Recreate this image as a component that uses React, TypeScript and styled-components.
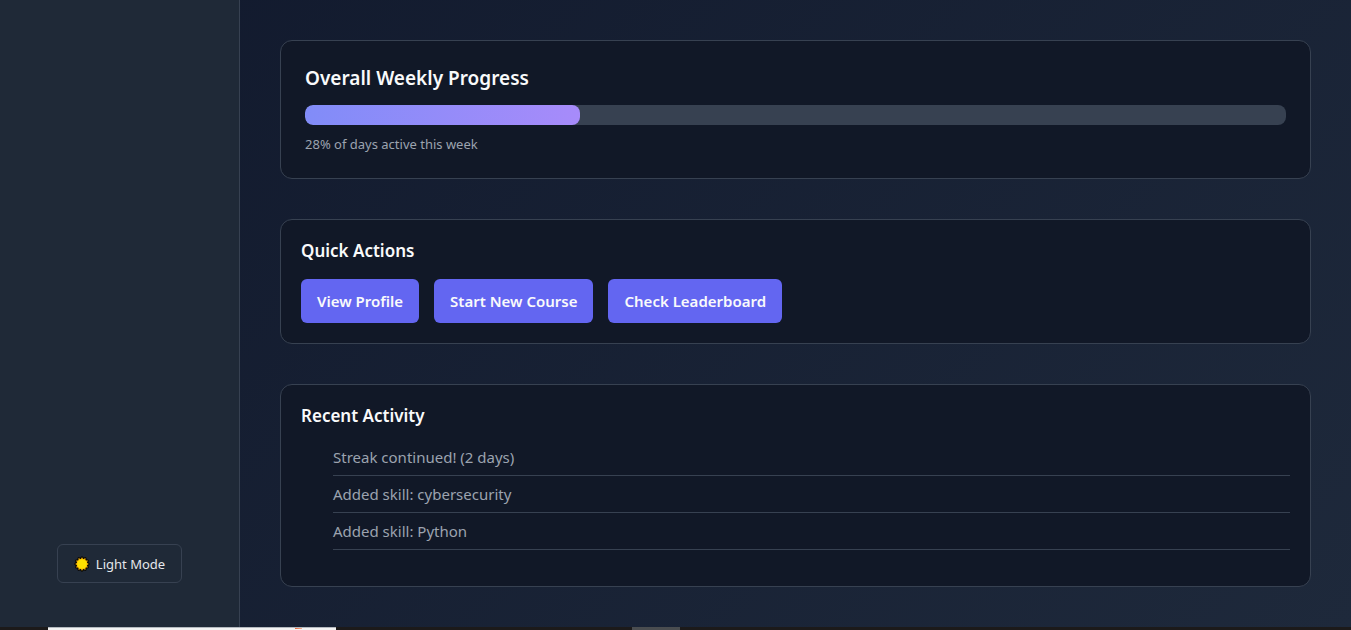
import React from "react";
import styled, { createGlobalStyle } from "styled-components";

const GlobalStyle = createGlobalStyle`
  *, *::before, *::after { box-sizing: border-box; }
  body {
    margin: 0;
    background: #0f172a;
    color: #f9fafb;
    font-family: "Segoe UI", "Noto Sans", sans-serif;
  }
`;

const Page = styled.div`
  display: flex;
  flex-direction: column;
  min-height: 100vh;
  background: linear-gradient(135deg, #11192d, #1e293b);
`;

const Body = styled.div`
  display: flex;
  flex: 1;
`;

const Sidebar = styled.aside`
  display: flex;
  flex-direction: column;
  justify-content: flex-end;
  align-items: center;
  flex: none;
  width: 240px;
  padding-bottom: 44px;
  background: #1f2937;
  border-right: 1px solid #374151;
`;

const ThemeButton = styled.button`
  display: flex;
  align-items: center;
  gap: 6px;
  padding: 9px 16px 8px;
  border: 1px solid #374151;
  border-radius: 6px;
  background: transparent;
  color: #e5e7eb;
  font: 400 13px/20px "Segoe UI", "Noto Sans", sans-serif;
  cursor: pointer;
`;

const Main = styled.main`
  display: flex;
  flex-direction: column;
  gap: 40px;
  flex: 1;
  min-width: 0;
  padding: 40px;
`;

const Card = styled.section<{ $pad: number }>`
  padding: ${(p) => p.$pad}px;
  background: #111827;
  border: 1px solid #374151;
  border-radius: 12px;
`;

const CardTitle = styled.h3<{ $large?: boolean }>`
  margin: 0;
  font-size: ${(p) => (p.$large ? 19 : 17)}px;
  line-height: ${(p) => (p.$large ? 26 : 22)}px;
  font-weight: 600;
`;

const Track = styled.div`
  height: 20px;
  margin: 14px 0 10px;
  overflow: hidden;
  border-radius: 8px;
  background: #374151;
`;

const Fill = styled.div`
  height: 100%;
  border-radius: 8px;
  background: linear-gradient(90deg, #818cf8, #a78bfa);
`;

const Note = styled.p`
  margin: 0;
  color: #9ca3af;
  font-size: 13px;
  line-height: 19px;
`;

const Actions = styled.div`
  display: flex;
  flex-wrap: wrap;
  gap: 15px;
  margin-top: 17px;
`;

const ActionButton = styled.button`
  padding: 11px 16px;
  border: 0;
  border-radius: 6px;
  background: #6366f1;
  color: #f9fafb;
  font: 600 15px/22px "Segoe UI", "Noto Sans", sans-serif;
  cursor: pointer;
`;

const ActivityList = styled.ul`
  margin: 12px 0 16px;
  padding: 0 0 0 32px;
  list-style: none;
`;

const ActivityItem = styled.li`
  padding: 8px 0;
  border-bottom: 1px solid #374151;
  color: #9ca3af;
  font-size: 15px;
  line-height: 20px;
`;

const Taskbar = styled.footer`
  display: flex;
  height: 3px;
  padding-left: 48px;
  background: #1c1a1a;
`;

const SearchBox = styled.div`
  width: 288px;
  padding-left: 247px;
  background: #f3f3f3;
  border-top: 1px solid #b4b9bf;
`;

const SearchMark = styled.div`
  width: 7px;
  height: 1px;
  background: linear-gradient(90deg, #e8643c, #f3b08c);
`;

const TaskItem = styled.div`
  width: 48px;
  margin-left: 296px;
  background: #4a4d50;
`;

const starPoints = (outer: number, inner: number) =>
  Array.from({ length: 24 }, (_, i) => {
    const r = i % 2 ? inner : outer;
    const a = (i * Math.PI) / 12;
    return `${(8 + r * Math.sin(a)).toFixed(2)},${(8 - r * Math.cos(a)).toFixed(2)}`;
  }).join(" ");

const SunIcon = () => (
  <svg width="16" height="16" viewBox="0 0 16 16" aria-hidden="true">
    <polygon points={starPoints(8, 6.8)} fill="#0c0a06" />
    <polygon points={starPoints(6.8, 5)} fill="#f7b000" />
    <circle cx="8" cy="8" r="4.8" fill="#ffe000" />
  </svg>
);

const progress = 28;
const actions = ["View Profile", "Start New Course", "Check Leaderboard"];
const activity = ["Streak continued! (2 days)", "Added skill: cybersecurity", "Added skill: Python"];

export default function App() {
  return (
    <>
      <GlobalStyle />
      <Page>
        <Body>
          <Sidebar>
            <ThemeButton type="button">
              <SunIcon />
              Light Mode
            </ThemeButton>
          </Sidebar>
          <Main>
            <Card $pad={24}>
              <CardTitle $large>Overall Weekly Progress</CardTitle>
              <Track
                role="progressbar"
                aria-label="Overall Weekly Progress"
                aria-valuenow={progress}
                aria-valuemin={0}
                aria-valuemax={100}
              >
                <Fill style={{ width: `${progress}%` }} />
              </Track>
              <Note>{progress}% of days active this week</Note>
            </Card>
            <Card $pad={20}>
              <CardTitle>Quick Actions</CardTitle>
              <Actions>
                {actions.map((label) => (
                  <ActionButton type="button" key={label}>
                    {label}
                  </ActionButton>
                ))}
              </Actions>
            </Card>
            <Card $pad={20}>
              <CardTitle>Recent Activity</CardTitle>
              <ActivityList>
                {activity.map((entry) => (
                  <ActivityItem key={entry}>{entry}</ActivityItem>
                ))}
              </ActivityList>
            </Card>
          </Main>
        </Body>
        <Taskbar>
          <SearchBox>
            <SearchMark />
          </SearchBox>
          <TaskItem />
        </Taskbar>
      </Page>
    </>
  );
}
